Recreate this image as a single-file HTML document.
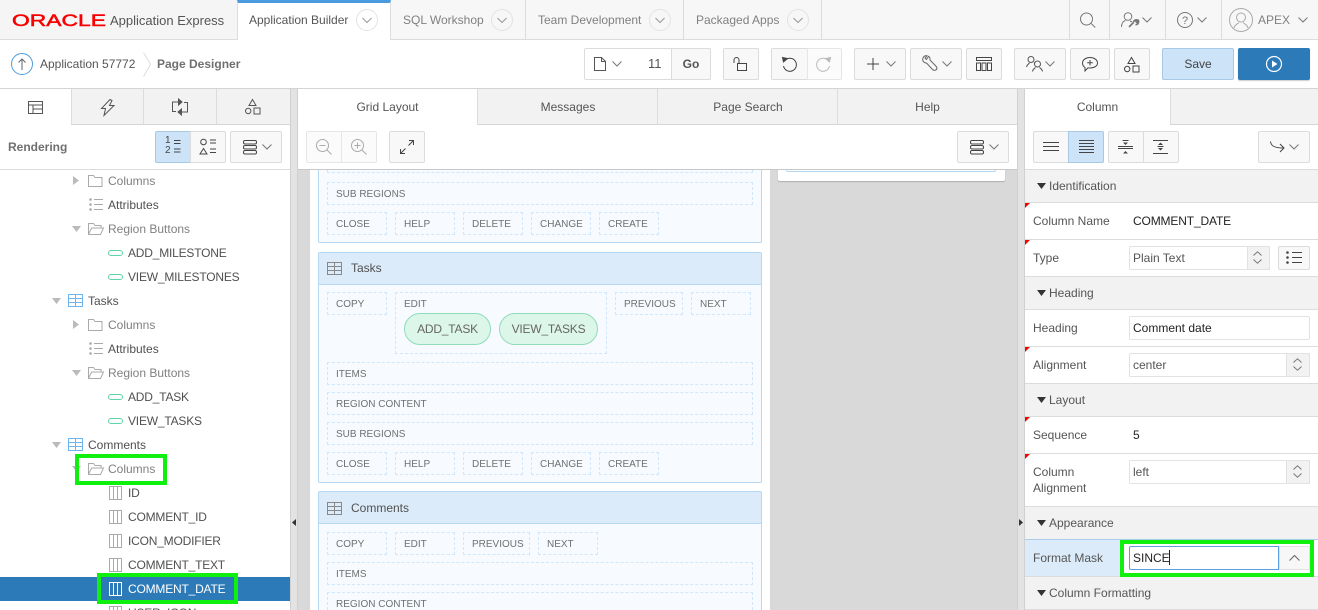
<!DOCTYPE html>
<html><head><meta charset="utf-8"><title>Page Designer</title>
<style>
html,body{margin:0;padding:0;width:1318px;height:610px;overflow:hidden}
body{position:relative;background:#fff;font-family:"Liberation Sans",sans-serif;font-size:12px;color:#555}
#root{left:0;top:0;width:1318px;height:610px;overflow:hidden;stroke:#555;fill:none;stroke-width:1}
div,svg,span.t{position:absolute;box-sizing:border-box}
svg{overflow:visible}
.t{white-space:nowrap;line-height:20px;height:20px}
.u{letter-spacing:-.2px}
.b{background:#f8f8f8;border:1px solid #dcdcdc;border-radius:2px;top:48px;height:32px}
.b2{top:131px}
.on{background:#cce3f8;border-color:#a9c8e4}
.dis{background:#fbfbfb;border-color:#e6e6e6}
.tab{background:#f2f2f2;border-left:1px solid #dcdcdc;border-bottom:1px solid #d6d6d6;top:89px;height:36px;text-align:center;line-height:37px;color:#555}
.d{border:1px dashed #cfe6fb;color:#707070;font-size:10px;line-height:24px;padding-left:8px;height:23px;white-space:nowrap}
.card{left:318px;width:444px;background:#f7fbff;border:1px solid #b5d8f5;border-radius:2px}
.hd{left:319px;width:442px;height:32px;background:#dcebf9;border-bottom:1px solid #b5d8f5}
.pill{background:#ddf6ea;border:1px solid #8fdcb8;border-radius:16px;height:32px;top:313px;text-align:center;line-height:30px;color:#666;letter-spacing:-.2px}
.sec{left:1025px;width:293px;height:33px;background:#f2f2f2;border-bottom:1px solid #dcdcdc}
.row{left:1025px;width:293px;background:#fff;border-bottom:1px solid #dcdcdc}
.tr{left:1025px;width:0;height:0;border-top:5px solid #f00;border-right:5px solid transparent}
.in{background:#fff;border:1px solid #e2e2e2;border-radius:2px;height:24px;line-height:22px;padding-left:3px;color:#555;white-space:nowrap}
.ar{background:#f2f2f2;border:1px solid #e2e2e2;height:24px}
.g{border:4px solid #10f00e}
.dk{color:#505050}.lt{color:#808080}
</style></head><body>
<div id="root">
<svg width="0" height="0" style="position:absolute"><defs>
<symbol id="chev" viewBox="0 0 10 6" overflow="visible"><path d="M.5.500L5 5 9.500.500"/></symbol>
<symbol id="fold" viewBox="0 0 14 12" overflow="visible"><path d="M.5 11.500V.500h5l1.500 2h7v9z" stroke="#aaa"/></symbol>
<symbol id="open" viewBox="0 0 16 12" overflow="visible"><path d="M.5 11.500V.500h5l1.500 2h6v2.500M.5 11.500l3-6.500h12l-3 6.500z" stroke="#aaa"/></symbol>
<symbol id="attr" viewBox="0 0 14 13" overflow="visible"><path d="M5 1.500h9M5 6.500h9M5 11.500h9" stroke="#aaa"/><circle cx="1.500" cy="1.500" r="1.300" fill="#aaa" stroke="none"/><circle cx="1.500" cy="6.500" r="1.300" fill="#aaa" stroke="none"/><circle cx="1.500" cy="11.500" r="1.300" fill="#aaa" stroke="none"/></symbol>
<symbol id="tbl" viewBox="0 0 15 13" overflow="visible"><path d="M.5.500h14v12H.5zM.5 4.500h14M.5 8.500h14M7.500.500v12"/></symbol>
<symbol id="col" viewBox="0 0 13 14" overflow="visible"><path d="M.5.500h12v13H.5zM4.500.500v13M8.500.500v13"/></symbol>
<symbol id="oval" viewBox="0 0 15 6" overflow="visible"><rect x=".5" y=".5" width="14" height="5" rx="2.500" stroke="#5fd6a4"/></symbol>
<symbol id="menu" viewBox="0 0 14 14" overflow="visible"><rect x=".5" y=".5" width="13" height="3.500" rx="1.500"/><rect x=".5" y="5.500" width="13" height="3.500" rx="1.500"/><rect x=".5" y="10.500" width="13" height="3.500" rx="1.500"/></symbol>
<symbol id="shapes" viewBox="0 0 15 15" overflow="visible"><path d="M7.500.500l3.500 6H4zM9 9h6v6H9z"/><circle cx="3.200" cy="12" r="2.700"/></symbol>
<symbol id="ud" viewBox="0 0 9 13" overflow="visible"><path d="M.5 4.500L4.500.800l4 3.700M.5 8.500l4 3.700 4-3.700" stroke="#777"/></symbol>
</defs></svg>

<!-- top bar -->
<div style="left:0;top:0;width:1318px;height:40px;background:#f7f7f7;border-bottom:1px solid #dcdcdc"></div>
<div style="left:0;top:0;width:237px;height:39px;background:#f5f5f5"></div>
<svg style="left:12px;top:12px" width="95" height="16"><text x="0" y="14" font-family="Liberation Sans" font-size="17" font-weight="400" fill="#f80000" stroke="#f80000" stroke-width=".5" textLength="94" lengthAdjust="spacingAndGlyphs">ORACLE</text></svg>
<span class="t" style="left:110px;top:11px;font-size:13px">Application Express</span>
<div style="left:237px;top:0;width:154px;height:40px;background:#fff;border-left:1px solid #dcdcdc;border-right:1px solid #dcdcdc;border-top:3px solid #4a9ae0"></div>
<span class="t" style="left:249px;top:10px">Application Builder</span>
<svg style="left:356px;top:9px" width="22" height="22"><circle cx="11" cy="11" r="10.500" stroke="#e3e3e3"/><use href="#chev" x="6" y="8.500" width="10" height="6" stroke="#999"/></svg>
<span class="t lt" style="left:403px;top:10px">SQL Workshop</span>
<svg style="left:491px;top:9px" width="22" height="22"><circle cx="11" cy="11" r="10.500" stroke="#e3e3e3"/><use href="#chev" x="6" y="8.500" width="10" height="6" stroke="#999"/></svg>
<div style="left:525px;top:0;width:1px;height:39px;background:#dcdcdc"></div>
<span class="t lt" style="left:538px;top:10px">Team Development</span>
<svg style="left:649px;top:9px" width="22" height="22"><circle cx="11" cy="11" r="10.500" stroke="#e3e3e3"/><use href="#chev" x="6" y="8.500" width="10" height="6" stroke="#999"/></svg>
<div style="left:683px;top:0;width:1px;height:39px;background:#dcdcdc"></div>
<span class="t lt" style="left:696px;top:10px">Packaged Apps</span>
<svg style="left:787px;top:9px" width="22" height="22"><circle cx="11" cy="11" r="10.500" stroke="#e3e3e3"/><use href="#chev" x="6" y="8.500" width="10" height="6" stroke="#999"/></svg>
<div style="left:821px;top:0;width:1px;height:39px;background:#dcdcdc"></div>
<div style="left:1069px;top:0;width:1px;height:39px;background:#dcdcdc"></div>
<div style="left:1109px;top:0;width:1px;height:39px;background:#dcdcdc"></div>
<div style="left:1165px;top:0;width:1px;height:39px;background:#dcdcdc"></div>
<div style="left:1221px;top:0;width:1px;height:39px;background:#dcdcdc"></div>
<svg style="left:1080px;top:13px" width="16" height="15" stroke="#777"><circle cx="6.500" cy="6" r="6"/><path d="M10.800 10.200l4.500 4.300"/></svg>
<svg style="left:1121px;top:12px" width="18" height="16" stroke="#777"><circle cx="7" cy="4.500" r="3.800"/><path d="M.5 15c0-4 2-6 4-6.500M9 9l2 1"/><path d="M8 15l4.500-4.500M12.500 10.500c0-2 2-3 4-2.500l-1.500 1.500 1 1 1.500-1.500c.5 2-1 4-3 3.500" stroke-width="1.600"/></svg>
<svg style="left:1142px;top:17px" width="10" height="6" stroke="#777"><use href="#chev" width="10" height="6"/></svg>
<svg style="left:1177px;top:12px" width="16" height="16" stroke="#777"><circle cx="8" cy="8" r="7.500"/><text x="8" y="12" font-family="Liberation Sans" font-size="11" text-anchor="middle" fill="#777" stroke="none">?</text></svg>
<svg style="left:1197px;top:17px" width="10" height="6" stroke="#777"><use href="#chev" width="10" height="6"/></svg>
<svg style="left:1229px;top:8px" width="24" height="24" stroke="#aaa"><circle cx="12" cy="12" r="11.500"/><circle cx="12" cy="9.500" r="4.500"/><path d="M5 20c1-4 4-4 5-5.500M19 20c-1-4-4-4-5-5.500"/></svg>
<span class="t lt" style="left:1258px;top:10px">APEX</span>
<svg style="left:1298px;top:17px" width="10" height="6" stroke="#777"><use href="#chev" width="10" height="6"/></svg>

<!-- breadcrumb -->
<svg style="left:11px;top:53px" width="22" height="22"><circle cx="11" cy="11" r="10.500" stroke="#4a9ae0"/><path d="M11 17V6M7.500 9.500L11 6l3.500 3.500" stroke="#666"/></svg>
<span class="t" style="left:40px;top:54px">Application 57772</span>
<svg style="left:143px;top:52px" width="9" height="25" stroke="#ddd"><path d="M.5.500L7.500 12.500.5 24.500"/></svg>
<span class="t" style="left:157px;top:54px;font-weight:700;color:#707070">Page Designer</span>

<!-- page toolbar -->
<div class="b" style="left:584px;width:127px;background:#fff"></div>
<div class="b" style="left:671px;width:40px;border-radius:0 2px 2px 0;text-align:center;line-height:30px;font-weight:700;color:#555">Go</div>
<svg style="left:594px;top:57px" width="12" height="14" stroke="#555"><path d="M.5.500h7l4 4v9H.5zM7.500.500v4h4"/></svg>
<svg style="left:612px;top:61px" width="10" height="6" stroke="#777"><use href="#chev" width="10" height="6"/></svg>
<span class="t" style="left:648px;top:54px;font-size:13px">11</span>
<div class="b" style="left:723px;width:36px"></div>
<svg style="left:733px;top:57px" width="14" height="14" stroke="#444"><path d="M1 6V3a2.500 2.500 0 0 1 5 0v3"/><path d="M4.500 6.500h9v7h-9z"/></svg>
<div class="b" style="left:771px;width:37px;border-radius:2px 0 0 2px"></div>
<div class="b dis" style="left:807px;width:35px;border-radius:0 2px 2px 0"></div>
<svg style="left:782px;top:57px" width="15" height="15" stroke="#444"><path d="M3 3.500A6.500 6.500 0 1 1 1.500 9"/><path d="M.5.500l5 1-4 3.500z" fill="#444"/></svg>
<svg style="left:816px;top:57px" width="15" height="15" stroke="#bbb"><path d="M12 3.500A6.500 6.500 0 1 0 13.500 9"/><path d="M14.500.500l-5 1 4 3.500z" fill="#bbb"/></svg>
<div class="b" style="left:854px;width:52px"></div>
<svg style="left:867px;top:58px" width="12" height="12" stroke="#444"><path d="M6 0v12M0 6h12"/></svg>
<svg style="left:886px;top:61px" width="10" height="6" stroke="#777"><use href="#chev" width="10" height="6"/></svg>
<div class="b" style="left:910px;width:52px"></div>
<svg style="left:922px;top:55px" width="16" height="17" stroke="#666"><path d="M5 .700C2.500.300.700 2 .700 4.500c0 1.500 1 3 3 3.500h.8l6 6.500c1.200 1.200 3.800 1.200 4.300-.7.300-1-.2-2-1-2.800L8 5c.2-1.500-.3-3-1.500-3.700L4.500 4.500 3 3z"/></svg>
<svg style="left:942px;top:61px" width="10" height="6" stroke="#777"><use href="#chev" width="10" height="6"/></svg>
<div class="b" style="left:966px;width:36px"></div>
<svg style="left:976px;top:57px" width="16" height="14" stroke="#444"><path d="M.5.500h15v3H.5zM.5 6h4v7.500h-4zM6 6h4v7.500H6zM11.500 6h4v7.500h-4z"/></svg>
<div class="b" style="left:1014px;width:52px"></div>
<svg style="left:1026px;top:56px" width="17" height="16" stroke="#555"><circle cx="5" cy="3.500" r="3"/><path d="M.5 11c.5-2.500 2-3 3-4M8 6.500l1 1"/><circle cx="11.500" cy="8" r="3"/><path d="M6.500 15.500c.3-2.500 2-3 3-4M16.500 15.500c-.3-2.500-2-3-3-4"/></svg>
<svg style="left:1045px;top:61px" width="10" height="6" stroke="#777"><use href="#chev" width="10" height="6"/></svg>
<div class="b" style="left:1070px;width:40px"></div>
<svg style="left:1082px;top:57px" width="16" height="15" stroke="#444"><path d="M8 .500c4 0 7.500 2.300 7.500 5.500S12 11 8 11c-.8 0-1.500 0-2-.2L3 14c0-1.500.2-2.500 0-3.500C1.500 9.500.5 8 .5 6 .5 2.800 4 .500 8 .500zM8 3v5.500M5.200 5.800h5.600"/></svg>
<div class="b" style="left:1114px;width:36px"></div>
<svg style="left:1124px;top:57px" width="15" height="15" stroke="#444"><use href="#shapes" width="15" height="15"/></svg>
<div class="b on" style="left:1162px;width:72px;text-align:center;line-height:30px;color:#444">Save</div>
<div class="b" style="left:1238px;width:72px;background:#2d7ab9;border-color:#2d7ab9;box-shadow:0 1px 1px rgba(0,0,0,.2)"></div>
<svg style="left:1266px;top:56px" width="16" height="16" stroke="#fff"><circle cx="8" cy="8" r="7.500" stroke-width="1.200"/><path d="M6 4.500l5.500 3.500L6 11.500z" fill="#fff" stroke="none"/></svg>
<div style="left:0;top:88px;width:1318px;height:1px;background:#d4d4d4"></div>

<!-- splitters -->
<div style="left:290px;top:89px;width:8px;height:521px;background:#e3e3e3;border-left:1px solid #d0d0d0;border-right:1px solid #d0d0d0"></div>
<div style="left:1017px;top:89px;width:8px;height:521px;background:#e3e3e3;border-left:1px solid #d0d0d0;border-right:1px solid #d0d0d0"></div>
<svg style="left:292px;top:519px" width="4" height="7"><path d="M4 0v7L0 3.500z" fill="#333" stroke="none"/></svg>
<svg style="left:1019px;top:519px" width="4" height="7"><path d="M0 0v7l4-3.500z" fill="#333" stroke="none"/></svg>

<!-- left tabs -->
<div class="tab" style="left:71px;width:73px"></div>
<div class="tab" style="left:143px;width:74px"></div>
<div class="tab" style="left:216px;width:74px"></div>
<svg style="left:28px;top:101px" width="15" height="13" stroke="#555"><path d="M.5.500h14v12H.5zM.5 4h14M5 4v8.500M5 8h9.500"/></svg>
<svg style="left:101px;top:99px" width="14" height="17" stroke="#555"><path d="M9 .500L.5 9.500h4L3 16.500l10-10H8.500L11 1.500z"/></svg>
<svg style="left:172px;top:99px" width="16" height="16" stroke="#555"><path d="M6 3H.5v9.500H4M10 13h5.500V3.500H12"/><path d="M6.500 0l3.500 3-3.500 3zM9.500 10L6 13l3.500 3z" fill="#555"/></svg>
<svg style="left:245px;top:99px" width="16" height="16" stroke="#555"><use href="#shapes" width="15" height="15"/></svg>

<!-- left toolbar -->
<span class="t" style="left:8px;top:137px;font-weight:700;color:#707070">Rendering</span>
<div class="b b2 on" style="left:155px;width:36px;border-radius:2px 0 0 2px"></div>
<span class="t" style="left:165px;top:136px;font-size:10px;line-height:10px;height:24px;color:#444">1<br>2</span>
<svg style="left:174px;top:140px" width="7" height="13" stroke="#444"><path d="M0 .500h6.500M0 3.500h6.500M0 9h6.500M0 12h6.500"/></svg>
<div class="b b2" style="left:190px;width:36px;border-radius:0 2px 2px 0"></div>
<svg style="left:200px;top:139px" width="16" height="16" stroke="#444"><circle cx="3.500" cy="3" r="2.800"/><path d="M3.500 9.500L7 15H0zM10 1h6M10 4h6M10 10h6M10 13.500h6"/></svg>
<div class="b b2" style="left:230px;width:52px"></div>
<svg style="left:243px;top:140px" width="14" height="14" stroke="#444"><use href="#menu" width="14" height="14"/></svg>
<svg style="left:262px;top:144px" width="10" height="6" stroke="#777"><use href="#chev" width="10" height="6"/></svg>
<div style="left:0;top:169px;width:290px;height:1px;background:#dcdcdc"></div>

<!-- tree -->
<div style="left:0;top:577px;width:290px;height:24px;background:#2d7ab9"></div>
<svg style="left:73px;top:176px" width="6" height="9"><path d="M0 0l6 4.500L0 9z" fill="#bbb" stroke="none"/></svg>
<svg style="left:88px;top:175px" width="14" height="12"><use href="#fold" width="14" height="12"/></svg>
<span class="t lt" style="left:108px;top:171px">Columns</span>
<svg style="left:89px;top:198px" width="14" height="13"><use href="#attr" width="14" height="13"/></svg>
<span class="t dk" style="left:108px;top:195px">Attributes</span>
<svg style="left:72px;top:226px" width="9" height="6"><path d="M0 0h9L4.500 6z" fill="#bbb" stroke="none"/></svg>
<svg style="left:88px;top:223px" width="16" height="12"><use href="#open" width="16" height="12"/></svg>
<span class="t lt" style="left:108px;top:219px">Region Buttons</span>
<svg style="left:108px;top:250px" width="15" height="6"><use href="#oval" width="15" height="6"/></svg>
<span class="t dk u" style="left:128px;top:243px">ADD_MILESTONE</span>
<svg style="left:108px;top:274px" width="15" height="6"><use href="#oval" width="15" height="6"/></svg>
<span class="t dk u" style="left:128px;top:267px">VIEW_MILESTONES</span>
<svg style="left:52px;top:298px" width="9" height="6"><path d="M0 0h9L4.500 6z" fill="#bbb" stroke="none"/></svg>
<svg style="left:68px;top:294px" width="15" height="13" stroke="#6db5f0"><use href="#tbl" width="15" height="13"/></svg>
<span class="t dk" style="left:88px;top:291px">Tasks</span>
<svg style="left:73px;top:320px" width="6" height="9"><path d="M0 0l6 4.500L0 9z" fill="#bbb" stroke="none"/></svg>
<svg style="left:88px;top:319px" width="14" height="12"><use href="#fold" width="14" height="12"/></svg>
<span class="t lt" style="left:108px;top:315px">Columns</span>
<svg style="left:89px;top:342px" width="14" height="13"><use href="#attr" width="14" height="13"/></svg>
<span class="t dk" style="left:108px;top:339px">Attributes</span>
<svg style="left:72px;top:370px" width="9" height="6"><path d="M0 0h9L4.500 6z" fill="#bbb" stroke="none"/></svg>
<svg style="left:88px;top:367px" width="16" height="12"><use href="#open" width="16" height="12"/></svg>
<span class="t lt" style="left:108px;top:363px">Region Buttons</span>
<svg style="left:108px;top:394px" width="15" height="6"><use href="#oval" width="15" height="6"/></svg>
<span class="t dk u" style="left:128px;top:387px">ADD_TASK</span>
<svg style="left:108px;top:418px" width="15" height="6"><use href="#oval" width="15" height="6"/></svg>
<span class="t dk u" style="left:128px;top:411px">VIEW_TASKS</span>
<svg style="left:52px;top:442px" width="9" height="6"><path d="M0 0h9L4.500 6z" fill="#bbb" stroke="none"/></svg>
<svg style="left:68px;top:438px" width="15" height="13" stroke="#6db5f0"><use href="#tbl" width="15" height="13"/></svg>
<span class="t dk" style="left:88px;top:435px">Comments</span>
<svg style="left:72px;top:466px" width="9" height="6"><path d="M0 0h9L4.500 6z" fill="#bbb" stroke="none"/></svg>
<svg style="left:88px;top:463px" width="16" height="12"><use href="#open" width="16" height="12"/></svg>
<span class="t lt" style="left:108px;top:459px">Columns</span>
<svg style="left:109px;top:486px" width="13" height="14" stroke="#aaa"><use href="#col" width="13" height="14"/></svg>
<span class="t dk u" style="left:128px;top:483px">ID</span>
<svg style="left:109px;top:510px" width="13" height="14" stroke="#aaa"><use href="#col" width="13" height="14"/></svg>
<span class="t dk u" style="left:128px;top:507px">COMMENT_ID</span>
<svg style="left:109px;top:534px" width="13" height="14" stroke="#aaa"><use href="#col" width="13" height="14"/></svg>
<span class="t dk u" style="left:128px;top:531px">ICON_MODIFIER</span>
<svg style="left:109px;top:558px" width="13" height="14" stroke="#aaa"><use href="#col" width="13" height="14"/></svg>
<span class="t dk u" style="left:128px;top:555px">COMMENT_TEXT</span>
<svg style="left:109px;top:582px" width="13" height="14" stroke="#fff"><use href="#col" width="13" height="14"/></svg>
<span class="t u" style="left:128px;top:579px;color:#fff">COMMENT_DATE</span>
<svg style="left:109px;top:606px" width="13" height="4" stroke="#aaa"><path d="M.5 4V.500h12V4M4.500.500V4M8.500.500V4"/></svg>
<span class="t dk u" style="left:128px;top:603px;height:7px;overflow:hidden">USER_ICON</span>
<div class="g" style="left:75px;top:454px;width:92px;height:31px"></div>
<div class="g" style="left:97px;top:573px;width:141px;height:31px"></div>

<!-- center -->
<div style="left:298px;top:89px;width:719px;height:81px;background:#fff;border-bottom:1px solid #c8c8c8"></div>
<div class="tab" style="left:477px;width:181px">Messages</div>
<div class="tab" style="left:657px;width:181px">Page Search</div>
<div class="tab" style="left:837px;width:180px">Help</div>
<span class="t" style="left:298px;top:97px;width:179px;text-align:center">Grid Layout</span>
<div class="b b2 dis" style="left:306px;width:36px;border-radius:2px 0 0 2px"></div>
<div class="b b2 dis" style="left:341px;width:36px;border-radius:0 2px 2px 0"></div>
<svg style="left:316px;top:139px" width="16" height="16" stroke="#aaa"><circle cx="6.500" cy="6.500" r="6"/><path d="M3.500 6.500h6M11 11l4.500 4.500"/></svg>
<svg style="left:351px;top:139px" width="16" height="16" stroke="#aaa"><circle cx="6.500" cy="6.500" r="6"/><path d="M3.500 6.500h6M6.500 3.500v6M11 11l4.500 4.500"/></svg>
<div class="b b2" style="left:389px;width:36px"></div>
<svg style="left:400px;top:140px" width="14" height="14" stroke="#444"><path d="M8.500 5.500L13.500.500M9 .500h4.500V5M5.500 8.500l-5 5M.5 9v4.500H5"/></svg>
<div class="b b2" style="left:957px;width:52px"></div>
<svg style="left:970px;top:140px" width="14" height="14" stroke="#444"><use href="#menu" width="14" height="14"/></svg>
<svg style="left:989px;top:144px" width="10" height="6" stroke="#777"><use href="#chev" width="10" height="6"/></svg>

<div style="left:298px;top:170px;width:719px;height:440px;background:#d9d9d9;overflow:hidden">
  <div style="left:12px;top:0;width:460px;height:440px;background:#fff"></div>
  <div style="left:480px;top:0;width:227px;height:11px;background:#fff;border-radius:0 0 2px 2px;box-shadow:0 1px 1px rgba(0,0,0,.2)"></div>
  <div style="left:488px;top:0;width:210px;height:2px;border:1px solid #b5d8f5;border-top:0;border-radius:0 0 2px 2px"></div>
</div>

<div style="left:310px;top:170px;width:460px;height:440px;overflow:hidden">
<div class="card" style="left:8px;top:0;height:73px;border-top:0;border-radius:0 0 2px 2px"></div>
<div class="d" style="left:17px;top:0;width:426px;height:3px;border-top:0;padding:0"></div>
<div class="d" style="left:17px;top:12px;width:426px">SUB REGIONS</div>
<div class="d" style="left:17px;top:42px;width:60px">CLOSE</div>
<div class="d" style="left:85px;top:42px;width:60px">HELP</div>
<div class="d" style="left:153px;top:42px;width:60px">DELETE</div>
<div class="d" style="left:221px;top:42px;width:60px">CHANGE</div>
<div class="d" style="left:289px;top:42px;width:60px">CREATE</div>

<div class="card" style="left:8px;top:82px;height:231px"></div>
<div class="hd" style="left:9px;top:83px"></div>
<svg style="left:17px;top:92px" width="15" height="13" stroke="#888"><use href="#tbl" width="15" height="13"/></svg>
<span class="t" style="left:41px;top:88px;color:#505050">Tasks</span>
<div class="d" style="left:17px;top:122px;width:60px">COPY</div>
<div class="d" style="left:85px;top:122px;width:212px;height:62px">EDIT</div>
<div class="pill" style="left:94px;top:143px;width:87px">ADD_TASK</div>
<div class="pill" style="left:189px;top:143px;width:99px">VIEW_TASKS</div>
<div class="d" style="left:305px;top:122px;width:68px">PREVIOUS</div>
<div class="d" style="left:381px;top:122px;width:60px">NEXT</div>
<div class="d" style="left:17px;top:192px;width:426px">ITEMS</div>
<div class="d" style="left:17px;top:222px;width:426px">REGION CONTENT</div>
<div class="d" style="left:17px;top:252px;width:426px">SUB REGIONS</div>
<div class="d" style="left:17px;top:282px;width:60px">CLOSE</div>
<div class="d" style="left:85px;top:282px;width:60px">HELP</div>
<div class="d" style="left:153px;top:282px;width:60px">DELETE</div>
<div class="d" style="left:221px;top:282px;width:60px">CHANGE</div>
<div class="d" style="left:289px;top:282px;width:60px">CREATE</div>

<div class="card" style="left:8px;top:321px;height:119px;border-bottom:0;border-radius:2px 2px 0 0"></div>
<div class="hd" style="left:9px;top:322px"></div>
<svg style="left:17px;top:332px" width="15" height="13" stroke="#888"><use href="#tbl" width="15" height="13"/></svg>
<span class="t" style="left:41px;top:328px;color:#505050">Comments</span>
<div class="d" style="left:17px;top:362px;width:60px">COPY</div>
<div class="d" style="left:85px;top:362px;width:60px">EDIT</div>
<div class="d" style="left:153px;top:362px;width:67px">PREVIOUS</div>
<div class="d" style="left:228px;top:362px;width:60px">NEXT</div>
<div class="d" style="left:17px;top:392px;width:426px">ITEMS</div>
<div class="d" style="left:17px;top:422px;width:426px;height:18px;border-bottom:0;overflow:hidden">REGION CONTENT</div>
</div>

<!-- right panel -->
<div class="tab" style="left:1170px;width:148px;border-left:1px solid #dcdcdc"></div>
<div style="left:1025px;top:124px;width:145px;height:1px;background:#fff"></div>
<span class="t" style="left:1025px;top:97px;width:145px;text-align:center">Column</span>
<div class="b b2" style="left:1033px;width:36px;border-radius:2px 0 0 2px"></div>
<svg style="left:1043px;top:142px" width="16" height="9" stroke="#444"><path d="M0 .500h16M0 4.500h16M0 8.500h16"/></svg>
<div class="b b2 on" style="left:1068px;width:36px;border-radius:0 2px 2px 0"></div>
<svg style="left:1079px;top:140px" width="15" height="13" stroke="#444"><path d="M0 .500h15M0 3.500h15M0 6.500h15M0 9.500h15M0 12.500h15"/></svg>
<div class="b b2" style="left:1108px;width:36px;border-radius:2px 0 0 2px"></div>
<svg style="left:1118px;top:140px" width="16" height="14" stroke="#444"><path d="M4.500 .500h6M0 6.500h15M0 8.500h15"/><path d="M5 2.500h5l-2.500 2.500zM5 13.500h5L7.500 11z" fill="#444" stroke="none"/></svg>
<div class="b b2" style="left:1143px;width:36px;border-radius:0 2px 2px 0"></div>
<svg style="left:1153px;top:140px" width="16" height="14" stroke="#444"><path d="M0 .500h15M0 13.500h15M4.500 6.500h6"/><path d="M5 5h5L7.500 2.500zM5 8h5l-2.500 2.500z" fill="#444" stroke="none"/></svg>
<div class="b b2" style="left:1258px;width:52px"></div>
<svg style="left:1270px;top:141px" width="15" height="12" stroke="#444"><path d="M.5.500c.5 4 3 6.500 13.500 6.500M10 3l4 4-4 4"/></svg>
<svg style="left:1289px;top:144px" width="10" height="6" stroke="#777"><use href="#chev" width="10" height="6"/></svg>
<div style="left:1025px;top:169px;width:293px;height:1px;background:#dcdcdc"></div>

<div class="sec" style="top:170px"></div>
<svg style="left:1037px;top:183px" width="9" height="6"><path d="M0 0h9L4.500 6z" fill="#333" stroke="none"/></svg>
<span class="t" style="left:1049px;top:176px">Identification</span>
<div class="row" style="top:203px;height:37px"></div>
<span class="t" style="left:1033px;top:211px">Column Name</span>
<span class="t u" style="left:1133px;top:211px;color:#222;letter-spacing:-.15px">COMMENT_DATE</span>
<div class="row" style="top:240px;height:37px"></div>
<span class="t" style="left:1033px;top:248px">Type</span>
<div class="in" style="left:1129px;top:246px;width:141px">Plain Text</div>
<div class="ar" style="left:1247px;top:246px;width:23px"></div>
<svg style="left:1253px;top:251px" width="9" height="13"><use href="#ud" width="9" height="13"/></svg>
<div class="b" style="left:1278px;top:246px;width:32px;height:24px"></div>
<svg style="left:1286px;top:251px" width="16" height="13" stroke="#444"><path d="M6 1.500h10M6 6.500h10M6 11.500h10"/><circle cx="1.500" cy="1.500" r="1.300" fill="#444" stroke="none"/><circle cx="1.500" cy="6.500" r="1.300" fill="#444" stroke="none"/><circle cx="1.500" cy="11.500" r="1.300" fill="#444" stroke="none"/></svg>

<div class="sec" style="top:277px"></div>
<svg style="left:1037px;top:290px" width="9" height="6"><path d="M0 0h9L4.500 6z" fill="#333" stroke="none"/></svg>
<span class="t" style="left:1049px;top:283px">Heading</span>
<div class="row" style="top:310px;height:37px"></div>
<span class="t" style="left:1033px;top:318px">Heading</span>
<div class="in" style="left:1129px;top:316px;width:181px;color:#222">Comment date</div>
<div class="row" style="top:347px;height:37px"></div>
<span class="t" style="left:1033px;top:355px">Alignment</span>
<div class="in" style="left:1129px;top:353px;width:181px">center</div>
<div class="ar" style="left:1286px;top:353px;width:24px"></div>
<svg style="left:1293px;top:358px" width="9" height="13"><use href="#ud" width="9" height="13"/></svg>

<div class="sec" style="top:384px"></div>
<svg style="left:1037px;top:397px" width="9" height="6"><path d="M0 0h9L4.500 6z" fill="#333" stroke="none"/></svg>
<span class="t" style="left:1049px;top:390px">Layout</span>
<div class="row" style="top:417px;height:37px"></div>
<span class="t" style="left:1033px;top:425px">Sequence</span>
<span class="t" style="left:1133px;top:425px;color:#222">5</span>
<div class="row" style="top:454px;height:53px"></div>
<span class="t" style="left:1033px;top:462px">Column</span>
<span class="t" style="left:1033px;top:478px">Alignment</span>
<div class="in" style="left:1129px;top:460px;width:181px">left</div>
<div class="ar" style="left:1286px;top:460px;width:24px"></div>
<svg style="left:1293px;top:465px" width="9" height="13"><use href="#ud" width="9" height="13"/></svg>

<div class="sec" style="top:507px"></div>
<svg style="left:1037px;top:520px" width="9" height="6"><path d="M0 0h9L4.500 6z" fill="#333" stroke="none"/></svg>
<span class="t" style="left:1049px;top:513px">Appearance</span>
<div class="row" style="top:539px;height:38px;border-top:1px solid #a9cdeb"></div>
<div style="left:1025px;top:540px;width:96px;height:36px;background:#dcebf9"></div>
<span class="t" style="left:1033px;top:548px">Format Mask</span>
<div class="in" style="left:1129px;top:546px;width:150px;border-color:#5a9ee0;color:#222;border-radius:2px 0 0 2px">SINCE</div>
<div style="left:1169px;top:550px;width:1px;height:15px;background:#222"></div>
<div class="ar" style="left:1279px;top:546px;width:31px;background:#f7f7f7"></div>
<svg style="left:1289px;top:555px" width="11" height="6" stroke="#666"><path d="M.5 5.500L5.500.500l5 5"/></svg>
<div class="g" style="left:1120px;top:540px;width:194px;height:37px"></div>

<div class="sec" style="top:577px"></div>
<svg style="left:1037px;top:590px" width="9" height="6"><path d="M0 0h9L4.500 6z" fill="#333" stroke="none"/></svg>
<span class="t" style="left:1049px;top:583px">Column Formatting</span>

<div class="tr" style="top:203px"></div>
<div class="tr" style="top:240px"></div>
<div class="tr" style="top:347px"></div>
<div class="tr" style="top:417px"></div>
<div class="tr" style="top:454px"></div>
</div>
</body></html>
